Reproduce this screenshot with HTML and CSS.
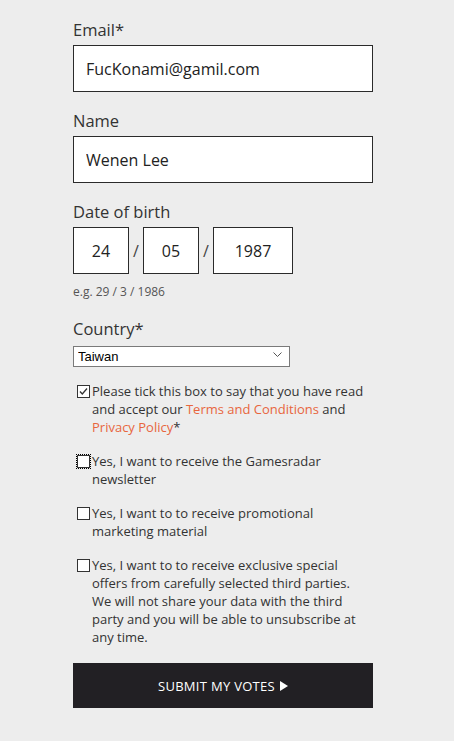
FILE: index.html
```html
<!DOCTYPE html>
<html lang="en">
<head>
  <meta charset="UTF-8" />
  <meta name="viewport" content="width=device-width, initial-scale=1.0"/>
  <title>Gamesradar Vote</title>
  <link rel="stylesheet" href="styles.css">
</head>
<body>
  <form class="vote-form">
    <div class="field">
      <label class="label" for="email">Email*</label>
      <input class="text-input" type="email" id="email" value="FucKonami@gamil.com">
    </div>

    <div class="field">
      <label class="label" for="name">Name</label>
      <input class="text-input" type="text" id="name" value="Wenen Lee">
    </div>

    <div class="field">
      <label class="label" for="dob-day">Date of birth</label>
      <div class="dob">
        <input class="dob-input" type="text" id="dob-day" value="24">
        <span class="dob-sep">/</span>
        <input class="dob-input" type="text" value="05">
        <span class="dob-sep">/</span>
        <input class="dob-input year" type="text" value="1987">
      </div>
      <p class="hint">e.g. 29 / 3 / 1986</p>
    </div>

    <div class="field country-field">
      <label class="label" for="country">Country*</label>
      <div class="select-wrap">
        <select id="country" class="country">
          <option>Taiwan</option>
        </select>
        <svg class="chevron" width="9" height="6" viewBox="0 0 9 6"><path d="M0.5 0.5 L4.5 4.5 L8.5 0.5" fill="none" stroke="#555" stroke-width="1"/></svg>
      </div>
    </div>

    <label class="check">
      <input type="checkbox" checked>
      <span>Please tick this box to say that you have read and accept our <a href="#">Terms and Conditions</a> and <a href="#">Privacy Policy</a>*</span>
    </label>

    <label class="check">
      <input type="checkbox" class="focused">
      <span>Yes, I want to receive the Gamesradar newsletter</span>
    </label>

    <label class="check">
      <input type="checkbox">
      <span>Yes, I want to to receive promotional marketing material</span>
    </label>

    <label class="check">
      <input type="checkbox">
      <span>Yes, I want to to receive exclusive special offers from carefully selected third parties. We will not share your data with the third party and you will be able to unsubscribe at any time.</span>
    </label>

    <button type="submit" class="submit">SUBMIT MY VOTES <svg class="arrow" width="8" height="10" viewBox="0 0 8 10"><path d="M0 0 L8 5 L0 10 Z" fill="#fff"/></svg></button>
  </form>
</body>
</html>
```

FILE: styles.css
```css
body { margin: 0; background: #ededed; font-family: "Open Sans", Arial, sans-serif; color: #333; }
.vote-form { width: 300px; margin: 0 auto; padding: 19px 0 32px; position: relative; left: -4px; }
.field { margin-bottom: 18px; }
.label { display: block; font-size: 16.5px; line-height: 22px; margin-bottom: 4px; color: #333; }
.text-input { box-sizing: border-box; width: 100%; height: 47px; padding: 0 12px; border: 1px solid #2b2b2b; background: #fff; font-family: "Open Sans", Arial, sans-serif; font-size: 16px; color: #222; border-radius: 0; }
.dob { display: flex; align-items: center; }
.dob-input { box-sizing: border-box; width: 56px; height: 47px; border: 1px solid #2b2b2b; background: #fff; text-align: center; font-family: "Open Sans", Arial, sans-serif; font-size: 16px; color: #222; padding: 0; border-radius: 0; }
.dob-input.year { width: 80px; }
.dob-sep { width: 14px; text-align: center; font-size: 16px; color: #444; }
.hint { margin: 10px 0 0; font-size: 12px; color: #555; line-height: 16px; }
.country-field { margin-bottom: 15px; }
.select-wrap { position: relative; width: 217px; }
.country { box-sizing: border-box; width: 217px; height: 21px; border: 1px solid #7a7a7a; background: #fff; font-family: "Liberation Sans", Arial, sans-serif; font-size: 13px; color: #000; padding: 0 4px; appearance: none; border-radius: 0; }
.chevron { position: absolute; right: 8px; top: 8px; pointer-events: none; }
.check { display: flex; align-items: flex-start; font-size: 13px; line-height: 18px; margin-bottom: 16px; color: #333; padding-right: 6px; }
.check input { appearance: none; box-sizing: border-box; margin: 3px 2px 0 4px; width: 13px; height: 13px; flex: none; border: 1px solid #333; background: #fff; border-radius: 0; }
.check input:checked { background: #fff url("data:image/svg+xml,%3Csvg xmlns='http://www.w3.org/2000/svg' width='11' height='11' viewBox='0 0 11 11'%3E%3Cpath d='M2 5.5 L4.3 8 L9 2.5' fill='none' stroke='%23333' stroke-width='1.3'/%3E%3C/svg%3E") no-repeat center; }
.check input.focused { outline: 1px dotted #000; outline-offset: 0; }
.check a { color: #e8663d; text-decoration: none; }
.submit { display: flex; align-items: center; justify-content: center; gap: 5px; width: 100%; height: 45px; margin-top: 17px; background: #222024; color: #fff; border: none; font-family: "Open Sans", Arial, sans-serif; font-size: 13px; letter-spacing: 0.3px; cursor: pointer; border-radius: 0; }
.arrow { display: block; }
```
